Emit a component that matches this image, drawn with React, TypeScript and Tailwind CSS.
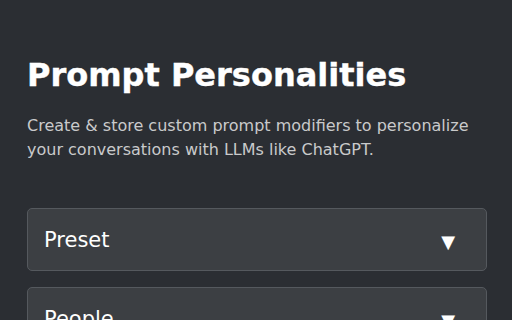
import React from 'react';

const Select = ({ label }: { label: string }) => (
  <div className="flex h-[63px] items-center justify-between rounded-[5px] border border-[#55595e] bg-[#3c3f43] pl-[16px] pr-[31px] pt-[3px]">
    <span className="text-[21px] text-white">{label}</span>
    <span className="text-[18px] text-white">▼</span>
  </div>
);

export default function App() {
  return (
    <div className="h-[320px] w-[512px] overflow-hidden bg-[#2b2e33] pl-[27px] pr-[25px] pt-[53px] font-['DejaVu_Sans',sans-serif]">
      <h1 className="text-[32px] font-bold leading-[44px] text-white [-webkit-text-stroke:0.4px_white]">Prompt Personalities</h1>
      <p className="mt-[17px] text-[16px] leading-[24px] text-[#c9cacb]">
        Create &amp; store custom prompt modifiers to personalize your conversations with LLMs like ChatGPT.
      </p>
      <div className="mt-[46px] flex flex-col gap-[16px]">
        <Select label="Preset" />
        <Select label="People" />
      </div>
    </div>
  );
}
